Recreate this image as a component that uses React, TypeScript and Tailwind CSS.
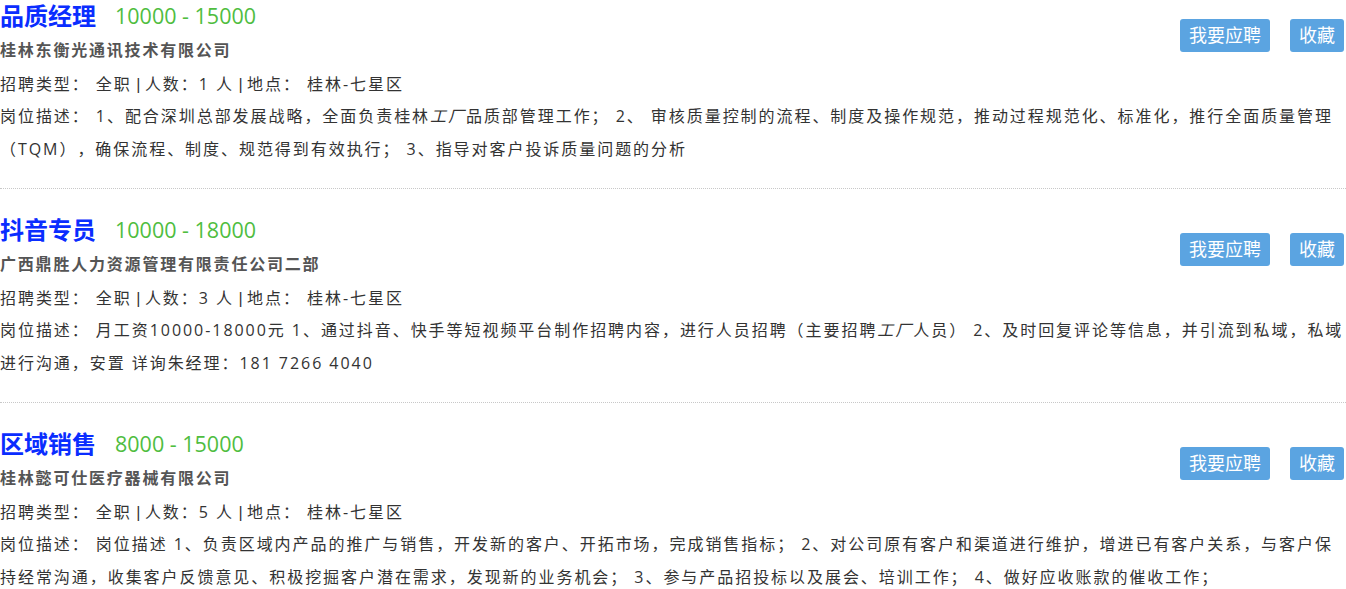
import type React from 'react';

interface Job {
  title: string;
  salary: string;
  company: string;
  count: number;
  desc: React.ReactNode;
}

const JOBS: Job[] = [
  {
    title: '品质经理',
    salary: '10000 - 15000',
    company: '桂林东衡光通讯技术有限公司',
    count: 1,
    desc: (
      <>
        1、配合深圳总部发展战略，全面负责桂林<i>工厂</i>品质部管理工作； 2、 审核质量控制的流程、制度及操作规范，推动过程规范化、标准化，推行全面质量管理（TQM），确保流程、制度、规范得到有效执行； 3、指导对客户投诉质量问题的分析
      </>
    ),
  },
  {
    title: '抖音专员',
    salary: '10000 - 18000',
    company: '广西鼎胜人力资源管理有限责任公司二部',
    count: 3,
    desc: (
      <>
        月工资10000-18000元 1、通过抖音、快手等短视频平台制作招聘内容，进行人员招聘（主要招聘<i>工厂</i>人员） 2、及时回复评论等信息，并引流到私域，私域进行沟通，安置 详询朱经理：181 7266 4040
      </>
    ),
  },
  {
    title: '区域销售',
    salary: '8000 - 15000',
    company: '桂林懿可仕医疗器械有限公司',
    count: 5,
    desc: (
      <>
        岗位描述 1、负责区域内产品的推广与销售，开发新的客户、开拓市场，完成销售指标； 2、对公司原有客户和渠道进行维护，增进已有客户关系，与客户保持经常沟通，收集客户反馈意见、积极挖掘客户潜在需求，发现新的业务机会； 3、参与产品招投标以及展会、培训工作； 4、做好应收账款的催收工作；
      </>
    ),
  },
];

function Sep(): React.ReactElement {
  return <span className="mx-[4.5px] font-['Liberation_Sans'] leading-none tracking-normal">|</span>;
}

function JobItem({ job, first }: { job: Job; first: boolean }): React.ReactElement {
  return (
    <div className={first ? 'pb-[22px] border-b border-dotted border-[#c8c8c8]' : 'pt-[25px] pb-[22px] border-b border-dotted border-[#c8c8c8]'}>
      {/* Actions */}
      <div className="float-right mt-[19px] mr-[2px] flex gap-5">
        <button className="h-[33px] rounded-[3px] bg-[#5ba4e1] px-[9px] text-[18px] leading-[33px] text-white">
          我要应聘
        </button>
        <button className="h-[33px] rounded-[3px] bg-[#5ba4e1] px-[9px] text-[18px] leading-[33px] text-white">
          收藏
        </button>
      </div>

      <div className="flex h-8 items-center">
        <span className="text-[24px] font-bold leading-8 text-[#0a2dff]">{job.title}</span>
        <span className="ml-[19px] text-[21.5px] leading-8 text-[#4fbd3f]">{job.salary}</span>
      </div>
      <p className="mt-[2px] text-base font-bold leading-8 tracking-[1.8px] text-[#555]">
        {job.company}
      </p>
      <p className="mt-[2px] h-8 text-base leading-8 tracking-[1.95px] text-[#333]">
        招聘类型： 全职<Sep />人数：{job.count} 人<Sep />地点： 桂林-七星区
      </p>
      <p className="text-base leading-[33px] tracking-[1.95px] text-[#333]">
        岗位描述： {job.desc}
      </p>
    </div>
  );
}

export default function App(): React.ReactElement {
  return (
    <div className="h-[589px] w-[1346px] overflow-hidden bg-white font-['Open_Sans','Noto_Sans_CJK_SC',sans-serif] [text-spacing-trim:space-all]">
      {JOBS.map((job, i) => (
        <JobItem key={job.title} job={job} first={i === 0} />
      ))}
    </div>
  );
}
